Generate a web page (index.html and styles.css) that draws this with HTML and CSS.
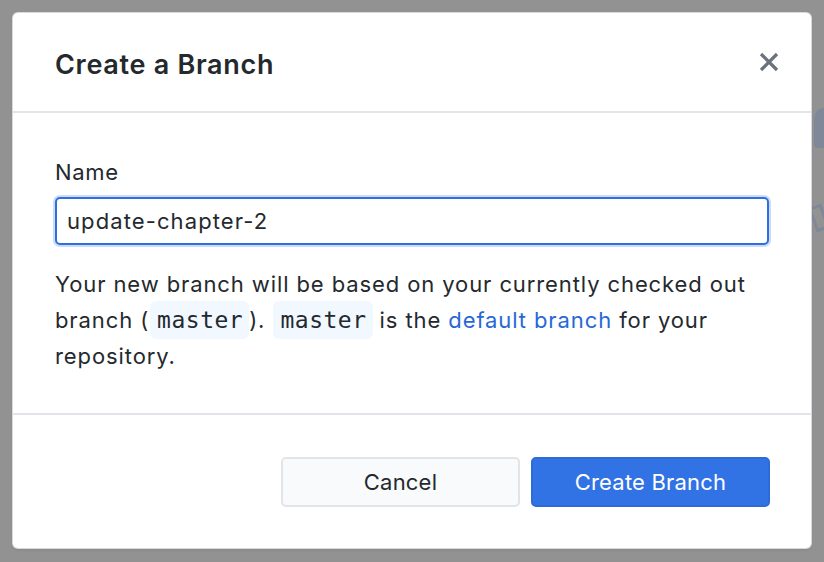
FILE: index.html
```html
<!DOCTYPE html>
<html lang="en">
<head>
<meta charset="utf-8">
<title>Create a Branch</title>
<link rel="stylesheet" href="styles.css">
</head>
<body>
<div class="backdrop">
  <div class="bg-shape bg-shape-a"></div>
  <div class="bg-shape bg-shape-b"></div>
  <div class="dialog">
    <header class="dialog-header">
      <h1 class="dialog-title">Create a Branch</h1>
      <button class="close" aria-label="Close">
        <svg width="20" height="20" viewBox="0 0 20 20"><path d="M2 2 L18 18 M18 2 L2 18" stroke="#6a737d" stroke-width="3.2" stroke-linecap="butt"/></svg>
      </button>
    </header>
    <div class="dialog-body">
      <label class="field-label" for="name">Name</label>
      <input id="name" class="text-input" type="text" value="update-chapter-2">
      <p class="note">Your new branch will be based on your currently checked out branch (<code>master</code>). <code>master</code> is the <a href="#">default branch</a> for your repository.</p>
    </div>
    <footer class="dialog-footer">
      <button class="btn">Cancel</button>
      <button class="btn btn-primary">Create Branch</button>
    </footer>
  </div>
</div>
</body>
</html>
```
FILE: styles.css
```css
* { box-sizing: border-box; }
html, body { margin: 0; padding: 0; }
body {
  width: 824px;
  height: 562px;
  overflow: hidden;
  background: #929293;
  font-family: Inter, "Noto Sans", sans-serif;
  color: #24292e;
}
.backdrop {
  position: relative;
  width: 824px;
  height: 562px;
  padding: 13px 13px 0 13px;
}
.bg-shape {
  position: absolute;
  background: #7f8898;
}
.bg-shape-a {
  left: 814px;
  top: 108px;
  width: 20px;
  height: 40px;
  border-radius: 10px 0 0 4px;
}
.bg-shape-b {
  left: 812px;
  top: 205px;
  width: 14px;
  height: 26px;
  background: transparent;
  border: 3px solid #7f8898;
  transform: rotate(-20deg);
}
.dialog {
  position: relative;
  width: 798px;
  height: 535px;
  background: #fff;
  border-radius: 5px;
  box-shadow: 0 0 0 1px #d6d9dd, 0 2px 3px rgba(0,0,0,0.08);
  display: flex;
  flex-direction: column;
}
.dialog-header {
  height: 100px;
  border-bottom: 2px solid #e1e4e8;
  display: flex;
  align-items: center;
  justify-content: space-between;
  padding: 0 32px 0 42px;
}
.dialog-title {
  margin: 0;
  font-size: 27px;
  font-weight: 600;
  letter-spacing: 0.7px;
  color: #24292e;
  position: relative;
  top: 2px;
}
.close {
  border: 0;
  background: none;
  padding: 0;
  width: 20px;
  height: 20px;
}
.close svg { display: block; }
.dialog-body {
  height: 302px;
  padding: 44px 42px 0 42px;
  border-bottom: 2px solid #e1e4e8;
  display: flex;
  flex-direction: column;
}
.field-label {
  font-size: 22px;
  line-height: 30px;
  letter-spacing: 0.7px;
  margin-bottom: 10px;
}
.text-input {
  width: 714px;
  height: 48px;
  border: 2px solid #2f6fdb;
  border-radius: 5px;
  box-shadow: 0 0 0 2px #cadcf8;
  padding: 0 10px;
  font: 22px Inter, "Noto Sans", sans-serif;
  letter-spacing: 1.1px;
  color: #24292e;
  outline: none;
}
.note {
  margin: 21px 0 0 0;
  font-size: 22px;
  line-height: 36px;
  letter-spacing: 0.9px;
  color: #24292e;
}
code {
  font-family: "DejaVu Sans Mono", monospace;
  font-size: 23px;
  letter-spacing: 0.5px;
  background: #f1f8ff;
  border-radius: 6px;
  padding: 6px 6px 6px 7px;
  margin: 0 0 0 1px;
}
a { color: #2867d6; text-decoration: none; }
.dialog-footer {
  flex: 1;
  display: flex;
  justify-content: flex-end;
  align-items: center;
  gap: 11px;
  padding: 0 41px 0 0;
}
.btn {
  width: 239px;
  height: 50px;
  border: 2px solid #e1e4e8;
  border-radius: 5px;
  background: #f9fafb;
  font: 22px Inter, "Noto Sans", sans-serif;
  letter-spacing: 0.2px;
  color: #24292e;
}
.btn-primary {
  background: #3172e4;
  border-color: #2d6bd9;
  color: #fff;
}
```
